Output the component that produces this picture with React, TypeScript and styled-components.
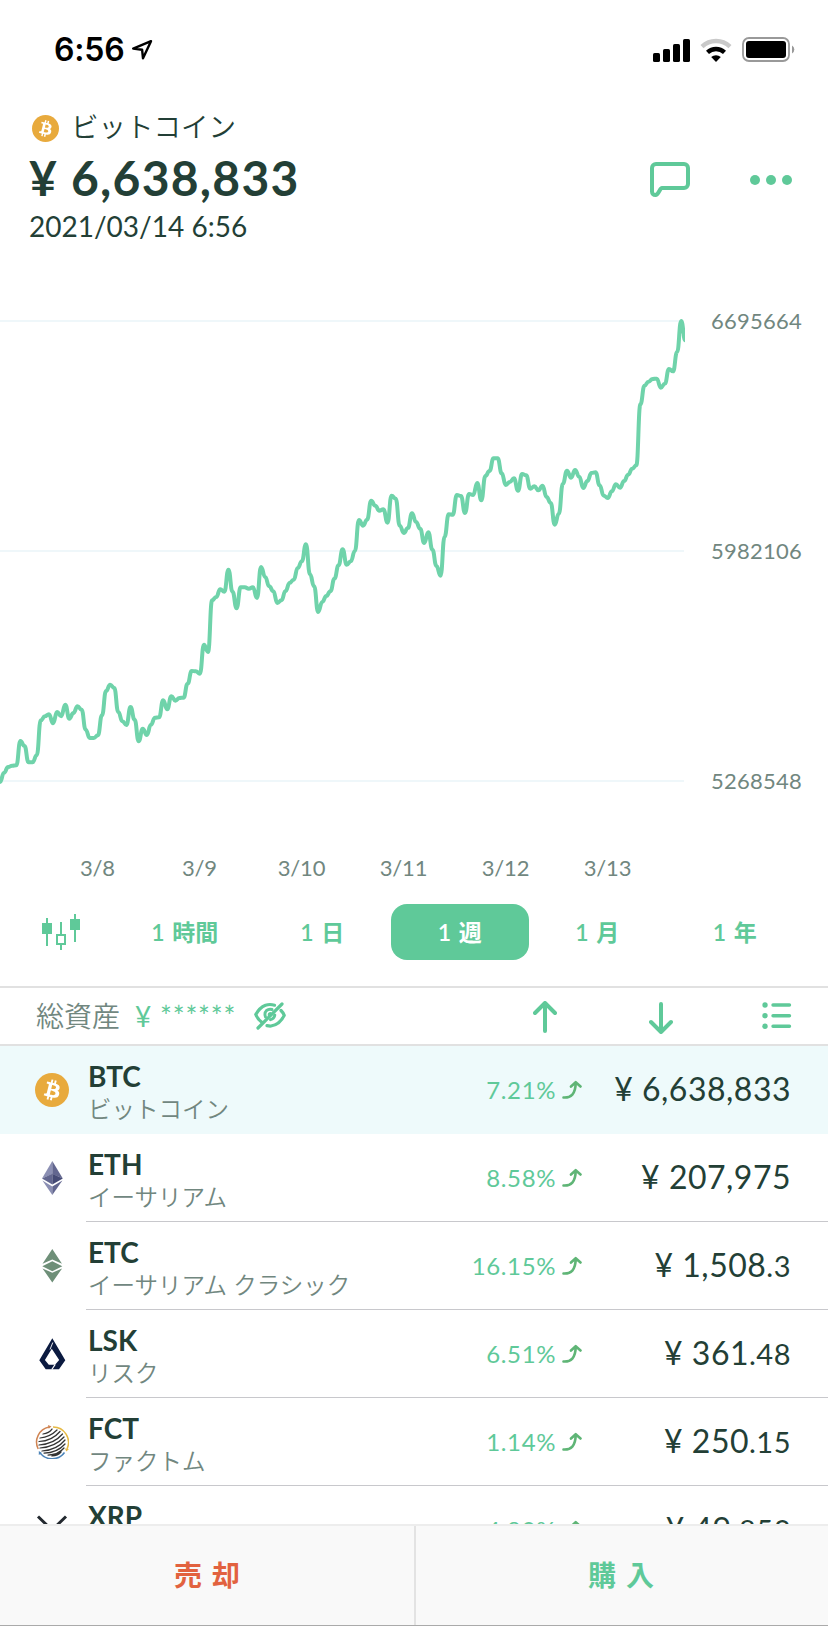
import React from "react";
import styled, { createGlobalStyle } from "styled-components";

const GREEN = "#5fc999";
const INK = "#233f36";
const MUTED = "#71877f";

const GlobalStyle = createGlobalStyle`
  *, *::before, *::after { box-sizing: border-box; }
  body {
    margin: 0;
    background: #fff;
    color: ${INK};
    font-family: Lato, "Noto Sans CJK JP", sans-serif;
  }
  svg { display: block; flex: none; }
  button { font: inherit; color: inherit; background: none; border: 0; padding: 0; }
`;

const Screen = styled.div`
  width: 828px;
  height: 1626px;
  display: flex;
  flex-direction: column;
  overflow: hidden;
  background: #fff;
  & > * { flex: none; }
`;

const StatusBar = styled.header`
  height: 100px;
  padding: 0 32px 0 54px;
  display: flex;
  align-items: center;
  justify-content: space-between;
`;

const Clock = styled.div`
  display: flex;
  align-items: center;
  gap: 7px;
  font: 600 32px/40px Inter, sans-serif;
  letter-spacing: -0.2px;
  color: #000;
`;

const StatusIcons = styled.div`
  display: flex;
  align-items: center;
  gap: 10px;
  padding-bottom: 1px;
`;

const Summary = styled.section`
  height: 200px;
  padding: 8px 36px 0 29px;
  display: flex;
  justify-content: space-between;
`;

const CoinTitle = styled.div`
  height: 40px;
  padding-left: 2.5px;
  display: flex;
  align-items: center;
  gap: 12.5px;
  font-size: 27.5px;
  font-weight: 350;
  line-height: 40px;
`;

const TitleText = styled.span`
  padding-bottom: 3px;
`;

const BigPrice = styled.div`
  margin-top: 2px;
  font-size: 48px;
  line-height: 56px;
  font-weight: 700;
  letter-spacing: 1.25px;
  white-space: pre;
`;

const Stamp = styled.div`
  margin-top: 2px;
  font-size: 28px;
  line-height: 36px;
`;

const Actions = styled.div`
  display: flex;
  align-items: center;
  gap: 60px;
  height: 144px;
`;

const ChartArea = styled.section`
  height: 540px;
  display: flex;
`;

const Plot = styled.div`
  width: 685px;
`;

const DateAxis = styled.div`
  display: flex;
  padding-left: 46.5px;
  margin-top: -4px;
`;

const DateLabel = styled.span`
  width: 102px;
  text-align: center;
  font-size: 22px;
  line-height: 28px;
  letter-spacing: -0.2px;
  color: ${MUTED};
`;

const PriceAxis = styled.div`
  height: 484px;
  padding: 7px 0 0 26px;
  display: flex;
  flex-direction: column;
  gap: 202px;
  font-size: 22px;
  line-height: 28px;
  letter-spacing: 0.25px;
  color: ${MUTED};
`;

const Periods = styled.nav`
  height: 146px;
  padding-top: 64px;
  padding-left: 40px;
  display: flex;
`;

const CandleButton = styled.button`
  width: 76px;
  height: 56px;
  display: flex;
  align-items: center;
`;

const Period = styled.button<{ $active?: boolean }>`
  width: 137.5px;
  height: 56px;
  border-radius: 16px;
  background: ${(p) => (p.$active ? GREEN : "transparent")};
  color: ${(p) => (p.$active ? "#fff" : GREEN)};
  font-size: 23px;
  font-weight: 600;
  line-height: 54px;
  word-spacing: 2px;
`;

const AssetBar = styled.section`
  height: 60px;
  padding: 0 36px;
  border-top: 2px solid #e1e1e1;
  border-bottom: 2px solid #e1e1e1;
  display: flex;
  align-items: center;
  color: ${GREEN};
`;

const AssetLabel = styled.span`
  width: 99px;
  font-size: 28px;
  font-weight: 350;
  color: ${MUTED};
  line-height: 52px;
`;

const AssetValue = styled.span`
  width: 119px;
  font-size: 28px;
  line-height: 54px;
  letter-spacing: 0.8px;
  white-space: pre;
`;

const SortIcons = styled.div`
  margin-left: auto;
  display: flex;
  align-items: center;
`;

const SortSlot = styled.span<{ $gap: number; $drop?: number }>`
  margin-left: ${(p) => p.$gap}px;
  padding-top: ${(p) => p.$drop ?? 0}px;
`;

const CoinList = styled.main`
  height: 478px;
  overflow: hidden;
`;

const Row = styled.div<{ $active?: boolean }>`
  height: 88px;
  display: flex;
  padding-left: 35px;
  background: ${(p) => (p.$active ? "#eefafb" : "#fff")};
`;

const Logo = styled.div`
  width: 51px;
  padding-top: 27px;
`;

const RowBody = styled.div<{ $line: boolean }>`
  flex: 1;
  display: flex;
  padding: 0 37px 0 2px;
  border-bottom: 1px solid ${(p) => (p.$line ? "#c8c8cc" : "transparent")};
`;

const Names = styled.div`
  width: 280px;
  padding-top: 12px;
`;

const Symbol = styled.div`
  font-size: 28px;
  font-weight: 700;
  line-height: 36px;
`;

const CoinName = styled.div`
  font-size: 23.5px;
  font-weight: 350;
  line-height: 30px;
  color: ${MUTED};
  white-space: nowrap;
`;

const Change = styled.div`
  width: 214px;
  height: 87px;
  display: flex;
  align-items: center;
  justify-content: flex-end;
  gap: 6px;
  font-size: 24px;
  letter-spacing: 0.6px;
  color: ${GREEN};
`;

const Price = styled.div`
  flex: 1;
  text-align: right;
  font-size: 32px;
  line-height: 85px;
  letter-spacing: 0.5px;
  white-space: pre;
`;

const Decimals = styled.span`
  font-size: 29px;
`;

const Footer = styled.footer`
  height: 102px;
  display: flex;
  background: #f9f9f9;
  border-top: 2px solid #ededed;
  border-bottom: 1px solid #aaa;
`;

const TradeButton = styled.button<{ $tone: string }>`
  flex: 1;
  font-size: 28px;
  font-weight: 700;
  letter-spacing: 10px;
  padding-left: 10px;
  padding-bottom: 4px;
  color: ${(p) => p.$tone};
  & + & { border-left: 2px solid #e3e3e3; padding-left: 8px; }
`;

/* Hourly prices over one week, as heights in thirds of a pixel from the chart's top edge. */
const SERIES = [
  1445, 1417, 1400, 1396, 1395, 1322, 1337, 1386, 1386, 1365, 1260, 1248, 1242, 1269, 1235, 1248, 1213, 1255, 1238,
  1218, 1228, 1288, 1313, 1313, 1305, 1245, 1172, 1153, 1163, 1235, 1263, 1274, 1220, 1258, 1323, 1285, 1304, 1273,
  1252, 1251, 1200, 1227, 1188, 1201, 1193, 1192, 1150, 1112, 1113, 1120, 1033, 1055, 900, 890, 867, 874, 808, 874,
  924, 861, 861, 865, 861, 893, 800, 830, 858, 873, 908, 900, 872, 848, 838, 803, 783, 732, 822, 858, 935, 905, 887,
  873, 835, 795, 747, 793, 783, 752, 659, 676, 658, 601, 616, 631, 627, 667, 586, 595, 676, 698, 683, 639, 665, 685,
  728, 696, 748, 797, 826, 709, 642, 643, 584, 587, 638, 581, 584, 548, 600, 527, 512, 474, 474, 519, 554, 545, 534,
  571, 521, 525, 565, 558, 570, 556, 590, 608, 673, 640, 550, 511, 532, 509, 529, 563, 542, 518, 516, 555, 586, 593,
  573, 552, 562, 542, 523, 505, 495, 312, 256, 244, 236, 235, 262, 250, 206, 213, 155, 62, 120,
];
const STEP = 4.079;

function linePath(values: number[]) {
  return values
    .map((v, i) => {
      const x = i * STEP;
      const y = v / 3 + 0.3;
      if (i === 0) return `M${x},${y}`;
      const mid = x - STEP / 2;
      return `C${mid},${values[i - 1] / 3 + 0.3} ${mid},${y} ${x},${y}`;
    })
    .join("");
}

const Chart = () => (
  <svg width="685" height="558" viewBox="0 0 685 558">
    <path d="M0 21H684M0 251H684M0 481H684" stroke="#eff7fa" strokeWidth="2" />
    <path d={linePath(SERIES)} fill="none" stroke="#6fd3aa" strokeWidth="4" strokeLinejoin="round" strokeLinecap="round" />
  </svg>
);

const BitcoinLogo = ({ size }: { size: number }) => (
  <svg width={size} height={size} viewBox="0 0 32 32">
    <circle cx="16" cy="16" r="16" fill="#e8aa3d" />
    <path
      fill="#fff"
      d="M23.189 14.02c.314-2.096-1.283-3.223-3.465-3.975l.708-2.84-1.728-.43-.69 2.765c-.454-.114-.92-.22-1.385-.326l.695-2.783L15.596 6l-.708 2.839c-.376-.086-.746-.17-1.104-.26l.002-.009-2.384-.595-.46 1.846s1.283.294 1.256.312c.7.175.826.638.805 1.006l-.806 3.235c.048.012.11.03.18.057l-.183-.045-1.13 4.532c-.086.212-.303.531-.793.41.018.025-1.256-.313-1.256-.313l-.858 1.978 2.25.561c.418.105.828.215 1.231.318l-.715 2.872 1.727.43.708-2.84c.472.127.93.245 1.378.357l-.706 2.828 1.728.43.715-2.866c2.948.558 5.164.333 6.097-2.333.752-2.146-.037-3.385-1.588-4.192 1.13-.26 1.98-1.003 2.207-2.538zm-3.95 5.538c-.533 2.147-4.148.986-5.32.695l.95-3.805c1.172.293 4.929.872 4.37 3.11zm.535-5.569c-.487 1.953-3.495.96-4.47.717l.86-3.45c.975.243 4.118.696 3.61 2.733z"
    />
  </svg>
);

const EtherLogo = () => (
  <svg width="34" height="34" viewBox="0 0 34 34">
    <path d="M17.3 0L7 17.4 17.3 13z" fill="#8b8fb3" />
    <path d="M17.3 0L27.8 17.4 17.3 13z" fill="#62668f" />
    <path d="M17.3 12.8L7 17.4l10.3 6z" fill="#62668f" />
    <path d="M17.3 12.8l10.5 4.6-10.5 6z" fill="#454a75" />
    <path d="M7.4 19.6l9.9 6V34z" fill="#8b8fb3" />
    <path d="M27.4 19.6l-10.1 6V34z" fill="#62668f" />
  </svg>
);

const ClassicLogo = () => (
  <svg width="34" height="34" viewBox="0 0 34 34" fill="#6e8f78">
    <path d="M17.3 0L27 14.7l-9.7-4.3-9.8 4.3z" />
    <path d="M17.3 12.2l10 5-10 5-10-5z" />
    <path d="M7.5 19.4l9.8 4.3 9.8-4.3L17.3 33.5z" />
  </svg>
);

const LiskLogo = () => (
  <svg width="34" height="34" viewBox="0 0 34 34">
    <path
      fill="#0b1a40"
      fillRule="evenodd"
      d="M17.300 1.300L30.300 23.300 24 32.300H10.700L4.300 23.300zM16.800 11.800L9.900 22.900 13.800 27.800H20L24.200 22.900z"
    />
    <path d="M17.800 5.500L15 12.500" stroke="#fff" strokeWidth=".9" />
    <path d="M20.200 27.500l-3.400 5" stroke="#fff" strokeWidth="1.300" />
  </svg>
);

const FactomLogo = () => (
  <svg width="34" height="34" viewBox="0 0 34 34" fill="none">
    <g stroke="#333" strokeWidth="1.25" strokeLinecap="round">
      <path d="M8 9q6-1 9-5M5 13q10-1 17-8M4 16.5Q17 16 25 6.5M4 20q15-1 23.5-11M5 23q15-1 24-11M7 26q15-1 23-11M9 28q13 0 21-9M13 30q10 0 16-7M17 31q6-.5 9-4" />
    </g>
    <path d="M3.2 24A15.4 15.4 0 0 1 14 2" stroke="#d08452" strokeWidth="1.5" />
    <path d="M13 0l3.5 1.6-2.8 2.2z" fill="#d08452" />
    <path d="M18 2A15.4 15.4 0 0 1 32 24" stroke="#e6b944" strokeWidth="1.5" />
    <path d="M30 23.5l4 .5-2.7 2.4z" fill="#e6b944" />
    <path d="M29.5 27.5A15.4 15.4 0 0 1 5 28" stroke="#4b83b8" strokeWidth="1.5" />
    <path d="M3.8 30v-4l3 2z" fill="#4b83b8" />
  </svg>
);

const RippleLogo = () => (
  <svg width="34" height="34" viewBox="0 0 34 34" fill="none" stroke="#23292f" strokeWidth="3">
    <path d="M3 3.500l8.300 8q5.700 5.200 11.400 0l8.300-8M3 30.500l8.300-8q5.700-5.200 11.400 0l8.300 8" />
  </svg>
);

const LocationArrow = () => (
  <svg width="22" height="22" viewBox="0 0 22 22" fill="none" stroke="#000" strokeWidth="2.4" strokeLinejoin="round">
    <path d="M20 2.2L2.2 9.6l8.9 1.1.9 8.6z" />
  </svg>
);

const Signal = () => (
  <svg width="37" height="24" viewBox="0 0 37 24">
    <rect x="0" y="15" width="7" height="9" rx="1.6" />
    <rect x="10" y="11" width="7" height="13" rx="1.6" />
    <rect x="20" y="6" width="7" height="18" rx="1.6" />
    <rect x="30" y="1" width="7" height="23" rx="1.6" />
  </svg>
);

const Wifi = () => (
  <svg width="32" height="24" viewBox="0 0 32 24" fill="none">
    <path d="M2 8.6a20.5 20.5 0 0 1 28 0" stroke="#c9c9c9" strokeWidth="4.4" />
    <path d="M7.5 14.3a12.5 12.5 0 0 1 17 0" stroke="#000" strokeWidth="4.4" />
    <path d="M16 24l-4.8-4.9a7 7 0 0 1 9.6 0z" fill="#000" />
  </svg>
);

const Battery = () => (
  <svg width="54" height="25" viewBox="0 0 54 25">
    <rect x="1" y="1" width="46" height="23" rx="6" fill="none" stroke="#999" strokeWidth="1.8" />
    <rect x="4" y="4" width="40" height="17" rx="3" />
    <path d="M50 8.5a4.6 4.6 0 0 1 0 8z" fill="#999" />
  </svg>
);

const ChatIcon = () => (
  <svg width="40" height="36" viewBox="0 0 40 36" fill="none" stroke={GREEN} strokeWidth="4" strokeLinejoin="round">
    <path d="M6 2h28a4 4 0 0 1 4 4v16a4 4 0 0 1-4 4H12C9.500 26 9 32.800 5.400 33C3.400 33 2 31.500 2 29.500V6a4 4 0 0 1 4-4z" />
  </svg>
);

const MoreIcon = () => (
  <svg width="42" height="10" viewBox="0 0 42 10" fill={GREEN}>
    <circle cx="5" cy="5" r="5" />
    <circle cx="21" cy="5" r="5" />
    <circle cx="37" cy="5" r="5" />
  </svg>
);

const CandleIcon = () => (
  <svg width="42" height="38" viewBox="0 0 42 38" fill={GREEN}>
    <path d="M6 5h2v28H6zM2 10h10v11H2zM34 1h2v28h-2zM30 6h10v11H30zM20 9h2v12h-2zM20 31h2v6h-2z" />
    <rect x="17" y="22" width="8" height="9" fill="none" stroke={GREEN} strokeWidth="2" />
  </svg>
);

const HiddenEye = () => (
  <svg width="32" height="28" viewBox="0 0 32 28" fill="none" stroke={GREEN} strokeWidth="3.2" strokeLinecap="round">
    <path d="M20.500 3.200Q16 1.800 11.500 3.200Q5.500 5.500 1.800 12.500Q3.500 17 7.500 20" />
    <path d="M27 8.500Q29.500 11 30.200 13.300Q26 22.500 17 24Q15.500 24.200 13 23.600" />
    <path d="M11.500 15Q10 11 12.500 8.500Q15 6.500 18 7.500M20.800 13q-.5 3.500-4.300 4.700" strokeWidth="2.900" />
    <path d="M14.800 13.500q-.4-2 1.500-2.500" strokeWidth="2" />
    <path d="M4 26L28 2" />
  </svg>
);

const SortArrow = ({ down }: { down?: boolean }) => (
  <svg width="24" height="32" viewBox="0 0 24 32" fill="none" stroke={GREEN} strokeWidth="4" strokeLinecap="round" strokeLinejoin="round">
    <path d={down ? "M12 2v27M2 20l10 10 10-10" : "M12 30V3M2 12L12 2l10 10"} />
  </svg>
);

const ListIcon = () => (
  <svg width="30" height="28" viewBox="0 0 30 28" stroke={GREEN} strokeWidth="3.400" strokeLinecap="round" fill={GREEN}>
    <path d="M11 3h16.500M11 13.700h16.500M11 24.300h16.500" />
    <g stroke="none">
      <circle cx="3" cy="3" r="2.700" />
      <circle cx="3" cy="13.700" r="2.700" />
      <circle cx="3" cy="24.300" r="2.700" />
    </g>
  </svg>
);

const RiseArrow = () => (
  <svg width="20" height="20" viewBox="0 0 20 20" fill="none" stroke="#5fb576" strokeWidth="2.600" strokeLinecap="round" strokeLinejoin="round">
    <path d="M1.500 17.500C9 18 13.500 14 13.700 3M9 6.500l4.700-4.300 4.800 4.300" />
  </svg>
);

const coins = [
  { symbol: "BTC", name: "ビットコイン", change: "7.21%", whole: "6,638,833", fraction: "", logo: <BitcoinLogo size={34} /> },
  { symbol: "ETH", name: "イーサリアム", change: "8.58%", whole: "207,975", fraction: "", logo: <EtherLogo /> },
  { symbol: "ETC", name: "イーサリアム クラシック", change: "16.15%", whole: "1,508", fraction: ".3", logo: <ClassicLogo /> },
  { symbol: "LSK", name: "リスク", change: "6.51%", whole: "361", fraction: ".48", logo: <LiskLogo /> },
  { symbol: "FCT", name: "ファクトム", change: "1.14%", whole: "250", fraction: ".15", logo: <FactomLogo /> },
  { symbol: "XRP", name: "", change: "4.80%", whole: "49", fraction: ".853", logo: <RippleLogo /> },
];

const periods = ["1 時間", "1 日", "1 週", "1 月", "1 年"];
const dates = ["3/8", "3/9", "3/10", "3/11", "3/12", "3/13"];
const levels = ["6695664", "5982106", "5268548"];

export default function App() {
  return (
    <>
      <GlobalStyle />
      <Screen>
        <StatusBar>
          <Clock>
            6:56
            <LocationArrow />
          </Clock>
          <StatusIcons>
            <Signal />
            <Wifi />
            <Battery />
          </StatusIcons>
        </StatusBar>
        <Summary>
          <div>
            <CoinTitle>
              <BitcoinLogo size={27} />
              <TitleText>ビットコイン</TitleText>
            </CoinTitle>
            <BigPrice>¥ 6,638,833</BigPrice>
            <Stamp>2021/03/14 6:56</Stamp>
          </div>
          <Actions>
            <ChatIcon />
            <MoreIcon />
          </Actions>
        </Summary>
        <ChartArea>
          <Plot>
            <Chart />
            <DateAxis>
              {dates.map((d) => (
                <DateLabel key={d}>{d}</DateLabel>
              ))}
            </DateAxis>
          </Plot>
          <PriceAxis>
            {levels.map((l) => (
              <span key={l}>{l}</span>
            ))}
          </PriceAxis>
        </ChartArea>
        <Periods>
          <CandleButton>
            <CandleIcon />
          </CandleButton>
          {periods.map((p) => (
            <Period key={p} $active={p === "1 週"}>
              {p}
            </Period>
          ))}
        </Periods>
        <AssetBar>
          <AssetLabel>総資産</AssetLabel>
          <AssetValue>¥ ******</AssetValue>
          <HiddenEye />
          <SortIcons>
            <SortSlot $gap={0} $drop={2}>
              <SortArrow />
            </SortSlot>
            <SortSlot $gap={92} $drop={4}>
              <SortArrow down />
            </SortSlot>
            <SortSlot $gap={89}>
              <ListIcon />
            </SortSlot>
          </SortIcons>
        </AssetBar>
        <CoinList>
          {coins.map((c, i) => (
            <Row key={c.symbol} $active={i === 0}>
              <Logo>{c.logo}</Logo>
              <RowBody $line={i > 0}>
                <Names>
                  <Symbol>{c.symbol}</Symbol>
                  {c.name && <CoinName>{c.name}</CoinName>}
                </Names>
                <Change>
                  {c.change}
                  <RiseArrow />
                </Change>
                <Price>
                  ¥ {c.whole}
                  <Decimals>{c.fraction}</Decimals>
                </Price>
              </RowBody>
            </Row>
          ))}
        </CoinList>
        <Footer>
          <TradeButton $tone="#e2623f">売却</TradeButton>
          <TradeButton $tone={GREEN}>購入</TradeButton>
        </Footer>
      </Screen>
    </>
  );
}
